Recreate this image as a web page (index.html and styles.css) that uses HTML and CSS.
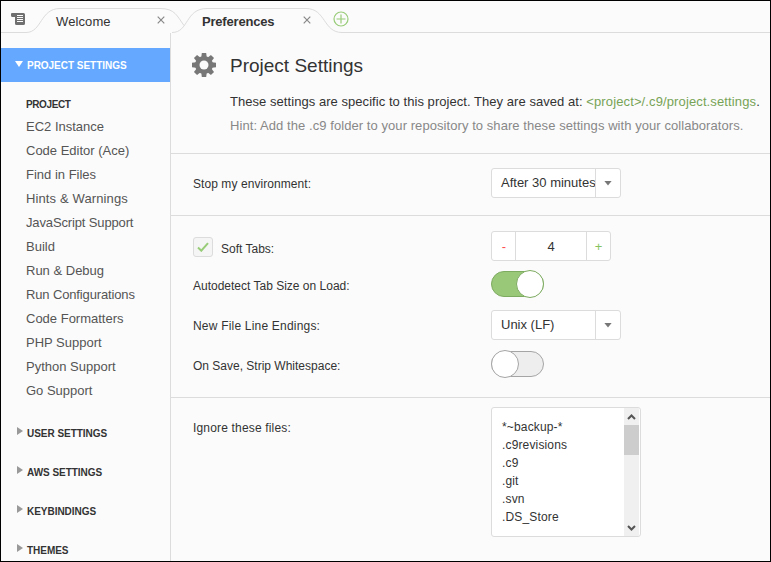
FILE: index.html
```html
<!DOCTYPE html>
<html lang="en">
<head>
<meta charset="utf-8">
<title>Preferences</title>
<link rel="stylesheet" href="styles.css">
</head>
<body>
<div class="window">
  <header class="tabbar">
    <svg class="tab-shapes" width="769" height="32" viewBox="1 1 769 32">
      <path d="M1 32.5H26C42 32.5 40 8.5 60 8.5H160C175 8.5 177 16 184 25.500"/>
      <path d="M172 32.5C189 32.5 185 8.500 207 8.500H306C326 8.500 323 32.500 342 32.500H770"/>
    </svg>
    <svg class="menu-icon" width="15" height="12" viewBox="0 0 15 12">
      <path fill="#6f6f6f" d="M1 0h11.500a1.500 1.500 0 0 1 1.500 1.500v9a1.500 1.500 0 0 1-1.500 1.500H5.500A1.500 1.500 0 0 1 4 10.500V4H1.500A1.500 1.500 0 0 1 0 2.500V1a1 1 0 0 1 1-1z"/>
      <path stroke="#fbfbfb" d="M6 2.500h6M6 4.500h6M6 6.500h6M6 8.500h6"/>
    </svg>
    <div class="tab tab-welcome"><span>Welcome</span><svg width="8" height="8" viewBox="0 0 8 8"><path d="M.7.7l6.600 6.600M7.300.7L.7 7.300"/></svg></div>
    <div class="tab tab-prefs"><span>Preferences</span><svg width="8" height="8" viewBox="0 0 8 8"><path d="M.7.7l6.600 6.600M7.300.7L.7 7.300"/></svg></div>
    <svg class="add" width="16" height="16" viewBox="0 0 16 16"><circle cx="8" cy="8" r="7"/><path d="M8 3.500v9M3.500 8h9"/></svg>
  </header>
  <div class="body">
    <nav class="sidebar">
      <div class="group group-active"><i class="tri-down"></i><span>PROJECT SETTINGS</span></div>
      <div class="sub">
        <h3>PROJECT</h3>
        <ul>
          <li>EC2 Instance</li><li>Code Editor (Ace)</li><li>Find in Files</li><li class="loose">Hints &amp; Warnings</li><li class="tight">JavaScript Support</li><li>Build</li><li>Run &amp; Debug</li><li class="tight">Run Configurations</li><li>Code Formatters</li><li>PHP Support</li><li>Python Support</li><li>Go Support</li>
        </ul>
      </div>
      <div class="group"><i class="tri-right"></i><span>USER SETTINGS</span></div>
      <div class="group"><i class="tri-right"></i><span>AWS SETTINGS</span></div>
      <div class="group"><i class="tri-right"></i><span>KEYBINDINGS</span></div>
      <div class="group"><i class="tri-right"></i><span>THEMES</span></div>
    </nav>
    <main class="content">
      <section class="intro">
        <svg class="gear" width="24" height="24" viewBox="-12 -12 24 24">
          <g fill="#777">
            <path id="tooth" d="M-2.700-8L-2.200-12H2.200L2.700-8V8L2.200 12H-2.200L-2.700 8z"/>
            <use href="#tooth" transform="rotate(45)"/><use href="#tooth" transform="rotate(90)"/><use href="#tooth" transform="rotate(135)"/>
            <circle r="9"/>
          </g>
          <circle r="4.500" fill="#fbfbfb"/>
        </svg>
        <div class="intro-text">
          <h1>Project Settings</h1>
          <p class="desc">These settings are specific to this project. They are saved at: <span class="path">&lt;project&gt;/.c9/project.settings</span>.</p>
          <p class="hint">Hint: Add the .c9 folder to your repository to share these settings with your collaborators.</p>
        </div>
      </section>
      <section class="stop">
        <div class="row"><label class="l-stop">Stop my environment:</label><div class="select"><span class="value">After 30 minutes</span><span class="arrow"><i></i></span></div></div>
      </section>
      <section class="editor">
        <div class="row row-tabs"><label><span class="check"><svg width="12" height="10" viewBox="0 0 12 10"><path d="M1 5.500L4.300 8.700 11 1.200"/></svg></span><span>Soft Tabs:</span></label><div class="spinner"><span class="minus">-</span><span class="num">4</span><span class="plus">+</span></div></div>
        <div class="row row-auto"><label>Autodetect Tab Size on Load:</label><div class="toggle on"><i></i></div></div>
        <div class="row row-line"><label class="l-line">New File Line Endings:</label><div class="select"><span class="value">Unix (LF)</span><span class="arrow"><i></i></span></div></div>
        <div class="row row-strip"><label>On Save, Strip Whitespace:</label><div class="toggle"><i></i></div></div>
      </section>
      <section class="ignore">
        <div class="row row-top"><label class="l-ign">Ignore these files:</label>
          <div class="listbox">
            <div class="lines"><div>*~backup-*</div><div>.c9revisions</div><div>.c9</div><div>.git</div><div>.svn</div><div>.DS_Store</div></div>
            <div class="scroll">
              <svg width="9" height="6" viewBox="0 0 9 6"><path d="M1 5l3.500-3.500L8 5"/></svg>
              <div class="thumb"></div>
              <svg width="9" height="6" viewBox="0 0 9 6"><path d="M1 1l3.500 3.500L8 1"/></svg>
            </div>
          </div>
        </div>
      </section>
    </main>
  </div>
</div>
</body>
</html>
```
FILE: styles.css
```css
* { box-sizing: border-box; }
body { margin: 0; font-family: "Liberation Sans", Arial, sans-serif; font-size: 13px; color: #333; }
h1, h3, p, ul { margin: 0; padding: 0; font-weight: normal; }
ul { list-style: none; }
svg { display: block; flex: none; }
.window { width: 771px; height: 562px; border: 1px solid #000; background: #fbfbfb; overflow: hidden; display: flex; flex-direction: column; white-space: nowrap; }

.tabbar { height: 32px; flex: none; display: flex; position: relative; }
.tab-shapes { position: absolute; left: 0; top: 0; fill: none; stroke: #dcdcdc; }
.menu-icon { margin: 12px 0 0 10px; }
.tab { display: flex; align-items: flex-start; height: 32px; color: #333; position: relative; }
.tab span { line-height: 16px; margin-top: 13px; }
.tab svg { margin: 15px 0 0 auto; fill: none; stroke: #888; stroke-width: 1.200; }
.tab-welcome { margin-left: 30px; width: 109px; letter-spacing: .1px; }
.tab-prefs { margin-left: 37px; width: 109px; font-weight: bold; letter-spacing: -.2px; }
.add { margin: 10px 0 0 22px; fill: none; stroke: #98cc78; stroke-width: 1.200; position: relative; }

.body { flex: 1; display: flex; min-height: 0; }
.sidebar { width: 170px; flex: none; border-right: 1px solid #dcdcdc; padding-top: 15px; overflow: hidden; }
.group { display: flex; height: 39px; padding: 4px 0 0 16px; font-size: 10px; font-weight: bold; letter-spacing: -.03px; line-height: 14px; }
.group span { margin-top: 3px; }
.group i { flex: none; margin-right: 4px; }
.group-active { height: 34px; background: #64a9ff; color: #fff; padding: 8px 0 0 14px; }
.group .tri-right { width: 6px; height: 8px; margin-top: 3px; background: #999; clip-path: polygon(0 0, 100% 50%, 0 100%); }
.tri-down { width: 8px; height: 6px; margin-top: 5px; background: #fff; clip-path: polygon(0 0, 100% 0, 50% 100%); }
.sub { padding: 16px 0 17px 25px; }
.sub h3 { font-size: 10px; font-weight: bold; line-height: 14px; margin-bottom: 3px; letter-spacing: -.4px; }
.sub li { line-height: 24px; height: 24px; color: #555; }
.sub .tight { letter-spacing: -.14px; }
.sub .loose { letter-spacing: .12px; }

.content { flex: 1; min-width: 0; }
section { border-bottom: 1px solid #dcdcdc; padding-left: 22px; }
.intro { height: 121px; display: flex; }
.gear { margin: 20px 14px 0 -1px; }
h1 { font-size: 19px; line-height: 24px; margin-top: 21px; }
.desc { line-height: 24px; margin-top: 12px; letter-spacing: .05px; }
.hint { line-height: 24px; color: #888; letter-spacing: .067px; }
.path { color: #77a356; letter-spacing: .12px; }
.stop { height: 62px; padding-top: 14px; }
.editor { height: 182px; padding-top: 15px; }
.ignore { border: 0; padding-top: 9px; }
.row { display: flex; align-items: center; height: 30px; font-size: 12px; }
.row label { width: 298px; flex: none; display: flex; align-items: center; padding-top: 3px; }
.row .l-stop { letter-spacing: .07px; padding-top: 1px; }
.row .l-line { letter-spacing: .2px; padding-top: 1px; }
.row .l-ign { letter-spacing: .17px; }
.row-auto { margin-top: 9px; height: 28px; }
.row-line { margin-top: 12px; }
.row-strip { margin-top: 10px; height: 28px; }
.row-top { height: 130px; align-items: flex-start; }
.row-top label { line-height: 16px; padding-top: 0; margin-top: 13px; }
.select { width: 130px; height: 30px; display: flex; background: #fff; border: 1px solid #dcdcdc; border-radius: 3px; font-size: 13px; line-height: 28px; }
.value { width: 103px; padding-left: 9px; overflow: hidden; }
.arrow { flex: 1; border-left: 1px solid #dcdcdc; display: flex; align-items: center; justify-content: center; }
.arrow i { width: 8px; height: 5px; background: #777; clip-path: polygon(0 0, 100% 0, 50% 100%); }
.row-tabs label { padding-top: 2px; }
.row-tabs label > span:last-child { padding-top: 3px; }
.check { width: 20px; height: 20px; border: 1px solid #dcdcdc; border-radius: 3px; background: #f5f5f5; display: flex; align-items: center; justify-content: center; margin-right: 8px; }
.check path { fill: none; stroke: #98cc78; stroke-width: 2; }
.spinner { width: 120px; height: 30px; display: flex; background: #fff; border: 1px solid #dcdcdc; border-radius: 3px; font-size: 13px; line-height: 29px; text-align: center; }
.minus { width: 24px; color: #ff4f4f; }
.num { width: 72px; margin-left: -1px; border: solid #dcdcdc; border-width: 0 1px; }
.plus { flex: 1; color: #85c45e; }
.toggle { width: 53px; height: 26px; border-radius: 13px; border: 1px solid #a5a5a5; background: #eee; display: flex; align-items: center; }
.toggle i { width: 28px; height: 28px; border-radius: 50%; border: 1px solid #a5a5a5; background: #fff; margin-left: -1px; flex: none; }
.toggle.on { background: #98c878; border-color: #7dab60; justify-content: flex-end; }
.toggle.on i { margin: 0 -1px 0 0; border-color: #7dab60; }
.listbox { width: 150px; height: 130px; border: 1px solid #dcdcdc; border-radius: 3px; background: #fff; display: flex; overflow: hidden; padding-right: 1px; }
.lines { flex: 1; padding: 10px 0 0 10px; line-height: 18px; letter-spacing: .15px; }
.scroll { width: 15px; background: #f0f0f0; display: flex; flex-direction: column; align-items: center; padding: 6px 0 5px; }
.scroll svg { fill: none; stroke: #555; stroke-width: 2; }
.scroll svg:last-child { margin-top: auto; }
.thumb { width: 15px; height: 30px; margin-top: 5px; background: #cdcdcd; }
```
